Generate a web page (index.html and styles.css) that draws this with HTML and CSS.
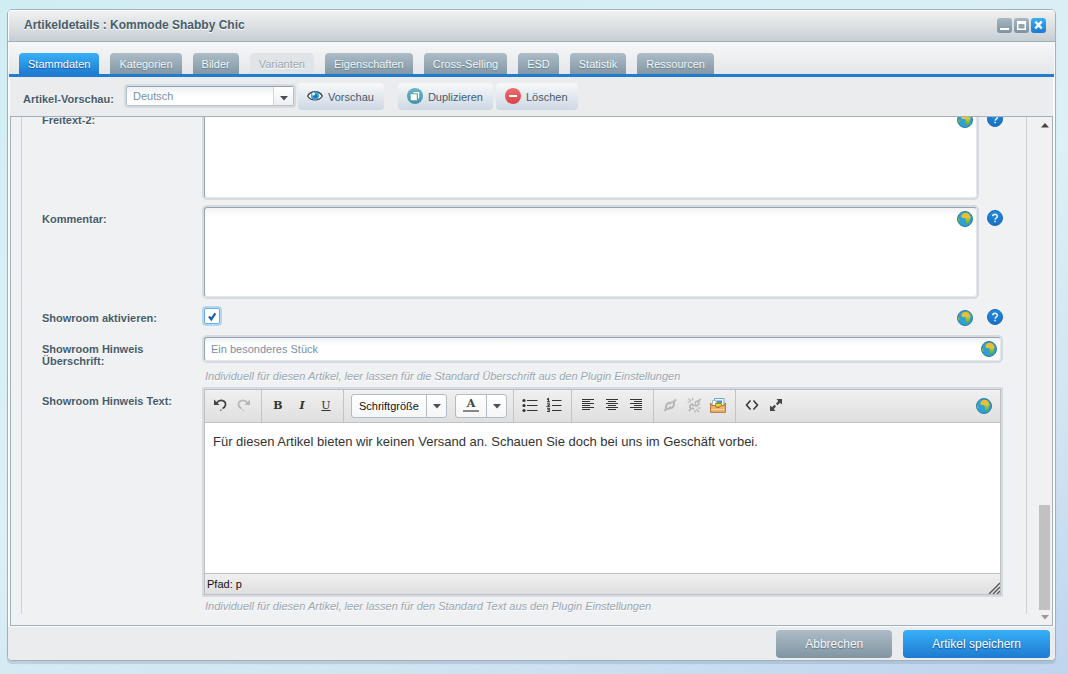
FILE: index.html
```html
<!DOCTYPE html>
<html lang="de">
<head>
<meta charset="utf-8">
<title>Artikeldetails : Kommode Shabby Chic</title>
<link rel="stylesheet" href="styles.css">
</head>
<body>
<svg class="defs" aria-hidden="true">
  <defs>
    <linearGradient id="sea" x1="0" y1="0" x2="0" y2="1"><stop offset="0" stop-color="#3a9fd0"/><stop offset="1" stop-color="#2b9fdc"/></linearGradient>
    <linearGradient id="land" x1="0" y1="0" x2="0" y2="1"><stop offset="0" stop-color="#f3ba2a"/><stop offset=".4" stop-color="#e3c531"/><stop offset=".6" stop-color="#a3c233"/><stop offset="1" stop-color="#5aa829"/></linearGradient>
    <linearGradient id="helpfill" x1="0" y1="0" x2="0" y2="1"><stop offset="0" stop-color="#1c8be4"/><stop offset="1" stop-color="#1b6fc0"/></linearGradient>
    <linearGradient id="teal" x1="0" y1="0" x2="0" y2="1"><stop offset="0" stop-color="#6db7c8"/><stop offset="1" stop-color="#3f94a8"/></linearGradient>
    <linearGradient id="red" x1="0" y1="0" x2="0" y2="1"><stop offset="0" stop-color="#ee6d6f"/><stop offset="1" stop-color="#d8434a"/></linearGradient>
  </defs>
  <symbol id="globe" viewBox="0 0 16 16">
    <circle cx="8" cy="8" r="7.5" fill="url(#sea)" stroke="#2c7c96"/>
    <path d="M5 3.5 6.500 2.200 9.500 1.800 12 3 12.700 5 13.800 6 12.800 8 12.300 10.500 11 13 9.600 13.400 8.800 11 8.800 8.200 7.800 7 5.300 7 4.300 5.500Z" fill="url(#land)"/>
    <path d="M1 7 2.200 8 2.300 10 1.300 10.800Z" fill="#8fc43a"/>
  </symbol>
  <symbol id="help" viewBox="0 0 16 16">
    <circle cx="8" cy="8" r="7.5" fill="url(#helpfill)" stroke="#1b6cb4"/>
    <path d="M5.700 6.300C5.700 3.800 10.400 3.700 10.400 6.200 10.400 7.800 8.200 7.800 8.100 9.600M8.100 10.800V12.300" fill="none" stroke="#e6f1fb" stroke-width="1.600"/>
  </symbol>
  <symbol id="down" viewBox="0 0 8 5"><path d="M0 0H8L4 4.5Z" fill="#4a4f55"/></symbol>
</svg>

<div class="window">
  <header class="titlebar">
    <h1 class="title">Artikeldetails : Kommode Shabby Chic</h1>
    <div class="window-tools">
      <button class="tool" aria-label="Minimieren"><svg viewBox="0 0 15 15"><path d="M3 11H12" stroke="#fff" stroke-width="2"/></svg></button>
      <button class="tool" aria-label="Maximieren"><svg viewBox="0 0 15 15"><path d="M3 3H12V12H3ZM4.500 6V10.500H10.500V6Z" fill="#fff" fill-rule="evenodd"/></svg></button>
      <button class="tool tool-close" aria-label="Schließen"><svg viewBox="0 0 15 15"><path d="M4.300 3.500 10.700 10.500M10.700 3.500 4.300 10.500" stroke="#fff" stroke-width="2.500"/></svg></button>
    </div>
  </header>

  <nav class="tabs">
    <button class="tab tab-active">Stammdaten</button>
    <button class="tab">Kategorien</button>
    <button class="tab">Bilder</button>
    <button class="tab" disabled>Varianten</button>
    <button class="tab">Eigenschaften</button>
    <button class="tab">Cross-Selling</button>
    <button class="tab">ESD</button>
    <button class="tab">Statistik</button>
    <button class="tab">Ressourcen</button>
  </nav>

  <div class="toolbar">
    <label class="label preview-label" for="preview">Artikel-Vorschau:</label>
    <div class="combo">
      <select id="preview"><option>Deutsch</option></select>
      <svg class="combo-arrow" viewBox="0 0 8 5"><use href="#down"/></svg>
    </div>
    <button class="action action-preview">
      <svg class="icon" viewBox="0 0 16 16"><path d="M.7 8C3.500 2.300 12.500 2.300 15.300 8 12.500 13.200 3.500 13.200.7 8Z" fill="#fff" stroke="#3f4549" stroke-width="1.300"/><circle cx="8" cy="7.800" r="4.200" fill="#3fa3d6"/><circle cx="8.300" cy="8.200" r="2" fill="#1878ac"/><circle cx="6.500" cy="6" r="1.500" fill="#e6f6fd"/></svg>Vorschau</button>
    <button class="action">
      <svg class="icon" viewBox="0 0 16 16"><circle cx="8" cy="8" r="8" fill="url(#teal)"/><path d="M6.500 4H12.200V10.500H11V5.300H6.500Z" fill="#fff"/><path d="M3.700 6.200H9.800V12.200H3.700Z" fill="#fff"/></svg>Duplizieren</button>
    <button class="action">
      <svg class="icon" viewBox="0 0 16 16"><circle cx="8" cy="8" r="8" fill="url(#red)"/><path d="M4 8H12" stroke="#fff" stroke-width="2"/></svg>Löschen</button>
  </div>

  <main class="content">
    <form class="fields" id="article">
      <div class="row">
        <label class="label" for="free2">Freitext-2:</label>
        <div class="field"><textarea class="box area" id="free2"></textarea><svg class="icon globe"><use href="#globe"/></svg></div>
        <svg class="icon help"><use href="#help"/></svg>
      </div>
      <div class="row">
        <label class="label" for="comment">Kommentar:</label>
        <div class="field"><textarea class="box area" id="comment"></textarea><svg class="icon globe"><use href="#globe"/></svg></div>
        <svg class="icon help"><use href="#help"/></svg>
      </div>
      <div class="row">
        <label class="label" for="showroom">Showroom aktivieren:</label>
        <div class="field check-field">
          <input class="check" type="checkbox" id="showroom" checked>
          <svg class="tick" viewBox="0 0 16 16"><path d="M5 8.500 7.300 11.300 11.300 5.300" fill="none" stroke="#1b62a5" stroke-width="2.200"/></svg>
          <svg class="icon globe"><use href="#globe"/></svg>
        </div>
        <svg class="icon help"><use href="#help"/></svg>
      </div>
      <div class="row row-hint">
        <label class="label" for="heading">Showroom Hinweis Überschrift:</label>
        <div class="field wide">
          <input class="box line" type="text" id="heading" value="Ein besonderes Stück"><svg class="icon globe"><use href="#globe"/></svg>
          <p class="hint">Individuell für diesen Artikel, leer lassen für die Standard Überschrift aus den Plugin Einstellungen</p>
        </div>
      </div>
      <div class="row row-last">
        <span class="label" id="text-label">Showroom Hinweis Text:</span>
        <div class="field wide">
          <div class="editor">
            <div class="editor-bar">
              <div class="group group-first">
                <button type="button" aria-label="Rückgängig"><svg viewBox="0 0 16 16"><path d="M4.500 6C8 1.500 14 3.500 13.500 8Q13 10.500 10.500 11.500" fill="none" stroke="#444" stroke-width="1.700"/><path d="M2 2.500V8H7.500Z" fill="#444"/><path d="M8 12.500H9.500V14H8Z" fill="#777"/></svg></button>
                <button type="button" class="dim" aria-label="Wiederholen"><svg viewBox="0 0 16 16"><path d="M11.500 6C8 1.500 2 3.500 2.500 8Q3 10.500 5.500 11.500" fill="none" stroke="#444" stroke-width="1.700"/><path d="M14 2.500V8H8.500Z" fill="#444"/><path d="M6.500 12.500H8V14H6.500Z" fill="#777"/></svg></button>
              </div>
              <div class="group">
                <button type="button" class="bold">B</button>
                <button type="button" class="italic">I</button>
                <button type="button" class="underline">U</button>
              </div>
              <div class="group group-split">
                <button type="button" class="split"><span class="split-text">Schriftgröße</span><span class="split-arrow"><svg viewBox="0 0 8 5"><use href="#down"/></svg></span></button>
                <button type="button" class="split"><span class="split-color">A</span><span class="split-arrow"><svg viewBox="0 0 8 5"><use href="#down"/></svg></span></button>
              </div>
              <div class="group">
                <button type="button" aria-label="Liste"><svg viewBox="0 0 16 16"><path d="M5 3.500H15.500M5 8.500H15.500M5 13.500H15.500" stroke="#333"/><g fill="#333"><circle cx="2" cy="3.500" r="1.600"/><circle cx="2" cy="8.500" r="1.600"/><circle cx="2" cy="13.500" r="1.600"/></g></svg></button>
                <button type="button" aria-label="Nummerierte Liste"><svg viewBox="0 0 16 16"><path d="M6 3.500H15.500M6 8.500H15.500M6 13.500H15.500" stroke="#333"/><path d="M1 2.500 2.500 1.500V5M1 4.800H4M1 6.800H3.300V8L1.200 9.300H4M1 11.300H3.300V14.500H1M1.500 12.800H3.300" fill="none" stroke="#333" stroke-width="1.100"/></svg></button>
              </div>
              <div class="group">
                <button type="button" aria-label="Linksbündig"><svg viewBox="0 0 16 16"><path d="M2 2.500H14M2 4.500H10M2 6.500H14M2 8.500H10M2 10.500H14M2 12.500H10" stroke="#333"/></svg></button>
                <button type="button" aria-label="Zentriert"><svg viewBox="0 0 16 16"><path d="M2 2.500H14M4 4.500H12M2 6.500H14M4 8.500H12M2 10.500H14M4 12.500H12" stroke="#333"/></svg></button>
                <button type="button" aria-label="Rechtsbündig"><svg viewBox="0 0 16 16"><path d="M2 2.500H14M6 4.500H14M2 6.500H14M6 8.500H14M2 10.500H14M6 12.500H14" stroke="#333"/></svg></button>
              </div>
              <div class="group">
                <button type="button" class="dim" aria-label="Link"><svg viewBox="0 0 16 16"><g fill="none" stroke="#444" stroke-width="2"><path d="M9 10Q4 14 4 10Q4 6.500 8 5.500M7 7Q12 3 12 6.500Q12 10.500 8 11.500"/><path d="M2.500 14 4.500 11.500M11.500 5 14 2.500"/></g></svg></button>
                <button type="button" class="dim" aria-label="Link entfernen"><svg viewBox="0 0 16 16"><g fill="none" stroke="#444" stroke-width="1.800"><path d="M3 14 5 11.500Q2.500 8.500 6 7L8 9M8 12 6 11M8.500 6Q11 3 12.500 5 13.500 8 10 9L9 7M12 5 14.500 2"/><path d="M1.500 5H4.500M2.500 2 5 4M6.500 1V3.500M11.500 11H15M10.500 12.500 13 15M9 13V15.500" stroke-width="1.200"/></g></svg></button>
                <button type="button" aria-label="Medien"><svg viewBox="0 0 16 16"><path d="M4.500 1.500H14V10H4.500Z" fill="#f2f8fc" stroke="#6fa9d0"/><path d="M6.500 3.500H12V6H6.500Z" fill="#4597cd"/><path d="M2.500 3.500H6V9H2.500Z" fill="#fff" stroke="#a8bccb"/><path d="M5.500 6.500H11.500V10H5.500Z" fill="#f3d32d" stroke="#ad8a18"/><path d="M.6 6 2 8.500H5L6.500 10.500H9.500L11 8.500H14L15.400 6V15.300H.6Z" fill="#edb373" stroke="#b27331"/><path d="M1.500 12.500H14.500" stroke="#f8d2a5"/></svg></button>
              </div>
              <div class="group group-end">
                <button type="button" aria-label="Quelltext"><svg viewBox="0 0 16 16"><path d="M6.500 3.500 2.500 8 6.500 12.500M9.500 3.500 13.500 8 9.500 12.500" fill="none" stroke="#333" stroke-width="1.500"/></svg></button>
                <button type="button" aria-label="Vollbild"><svg viewBox="0 0 16 16"><path d="M8.500 2H14V7.500L12 5.800 9.500 8.200 8 6.500 10.300 4ZM7.500 14H2V8.500L4 10.200 6.500 7.800 8 9.500 5.700 12Z" fill="#444"/></svg></button>
              </div>
              <svg class="icon editor-globe"><use href="#globe"/></svg>
            </div>
            <div class="editor-body" contenteditable="true" role="textbox" aria-labelledby="text-label">Für diesen Artikel bieten wir keinen Versand an. Schauen Sie doch bei uns im Geschäft vorbei.</div>
            <div class="editor-path"><span>Pfad: p</span><svg class="grip" viewBox="0 0 12 12"><path d="M1 12 12 1M5 12 12 5M9 12 12 9" stroke="#555" stroke-width="1.400"/></svg></div>
          </div>
          <p class="hint hint-editor">Individuell für diesen Artikel, leer lassen für den Standard Text aus den Plugin Einstellungen</p>
        </div>
      </div>
    </form>
    <div class="scrollbar" aria-hidden="true">
      <svg class="scroll-arrow" viewBox="0 0 8 5"><path d="M0 4.500H8L4 0Z" fill="#444"/></svg>
      <div class="thumb"></div>
      <svg class="scroll-arrow" viewBox="0 0 8 5"><path d="M0 0H8L4 4.500Z" fill="#999"/></svg>
    </div>
  </main>

  <footer class="footer">
    <button class="btn">Abbrechen</button>
    <button class="btn btn-primary">Artikel speichern</button>
  </footer>
</div>
</body>
</html>
```
FILE: styles.css
```css
* { box-sizing: border-box; }
body {
  margin: 0;
  height: 100vh;
  padding: 9px 12px 13px 7px;
  background: linear-gradient(160deg, #d1edf4 0%, #dcf0f6 50%, #cfe3f2 78%, #bfd4ee 100%);
  font: 11px/12px "Liberation Sans", Arial, sans-serif;
  color: #475c6a;
}
button, input, select, textarea { font: inherit; color: inherit; margin: 0; }
button { border: 0; padding: 0; background: none; }
svg { display: block; flex: none; }
.defs { position: absolute; width: 0; height: 0; }
.icon { width: 16px; height: 16px; }

.window {
  height: 100%;
  display: flex;
  flex-direction: column;
  border: 1px solid #a1b1bc;
  border-radius: 5px;
  background: #fafbfb;
  box-shadow: 0 3px 1px rgba(120, 145, 170, .3);
  overflow: hidden;
}
.titlebar {
  flex: none;
  height: 32px;
  display: flex;
  align-items: center;
  justify-content: space-between;
  padding: 0 9px 0 16px;
  border-bottom: 1px solid #9fafba;
  background: linear-gradient(#f1f2f2, #dde1e3 50%, #c6ced4);
  box-shadow: inset 1px 1px 0 #fff;
}
.title {
  margin: 0;
  font-size: 12px;
  line-height: 30px;
  height: 31px;
  text-shadow: 0 1px 0 #fff;
}
.window-tools { display: flex; gap: 2px; }
.tool { width: 15px; height: 15px; border-radius: 3px; background: linear-gradient(#a9b8c3, #7d929f); }
.tool-close { background: linear-gradient(#35b1f8, #1c79d0); }

.tabs {
  flex: none;
  height: 35px;
  margin: 0 1px;
  display: flex;
  align-items: flex-end;
  gap: 11px;
  padding: 0 10px;
  border-bottom: 3px solid #1f7dd1;
  background: linear-gradient(#f6f7f7, #e4e6e8);
}
.tab {
  height: 21px;
  padding: 0 9px;
  border-radius: 4px 4px 0 0;
  background: linear-gradient(#adbcc7, #8298a5);
  color: #f3f6f8;
  text-shadow: 0 1px 1px #667b89;
}
.tab-active { background: linear-gradient(#38b0f8, #1f7bd0); color: #fff; text-shadow: 0 1px 1px #0b4fa0; }
.tab:disabled { background: #e1e4e6; color: #98a6b0; text-shadow: 0 1px 0 #fff; }

.toolbar {
  flex: none;
  height: 39px;
  margin: 0 2px;
  padding: 6px 13px;
  display: flex;
  align-items: flex-start;
  background: #ebecee;
}
.label { font-weight: bold; text-shadow: 0 1px 0 #fff; }
.preview-label { width: 103px; padding-top: 10px; }
.combo {
  position: relative;
  width: 168px;
  height: 20px;
  margin: 3px 4px 0 0;
}
.combo select {
  appearance: none;
  display: block;
  width: 100%;
  height: 100%;
  padding: 0 26px 0 6px;
  border: 1px solid #b5c0c9;
  border-top-color: #93a3af;
  border-radius: 2px;
  box-shadow: 0 0 0 2px #d5dbe2;
  color: #7890a5;
  background: linear-gradient(#eef1f1, #fff 50%);
}
.combo-arrow {
  position: absolute;
  top: 1px;
  right: 1px;
  width: 20px;
  height: 18px;
  padding: 9px 5px 4px 6px;
  border-left: 1px solid #d0d6db;
  background: linear-gradient(#fff, #edf0f3);
  pointer-events: none;
}
.action {
  height: 27px;
  display: flex;
  align-items: center;
  gap: 5px;
  padding: 0 10px 0 9px;
  margin-right: 3px;
  border-radius: 4px;
  background: linear-gradient(#f8f9fa, #cdd8e5);
}
.action .icon { margin-bottom: 2px; }
.action-preview { margin-right: 14px; }

.content {
  flex: 1;
  min-height: 0;
  display: flex;
  margin: 0 2px;
  border: 1px solid #a1b1bc;
  background: #f0f1f3;
  overflow: hidden;
}
.fields {
  flex: 1;
  min-width: 0;
  align-self: flex-start;
  margin: -9px 10px 0;
  padding: 0 23px 2px 20px;
  border: solid #cbd0d5;
  border-width: 0 1px;
}
.row { display: flex; margin-bottom: 9px; }
.row-hint { margin-bottom: 7px; }
.row-last { margin-bottom: 0; }
.row > .label { flex: none; width: 162px; padding: 6px 24px 0 0; }
.field { position: relative; flex: 1; min-width: 0; }
.wide { margin-right: 2px; }
.box {
  display: block;
  width: 100%;
  border: 1px solid #e4e8ec;
  border-top-color: #96a5b1;
  border-left-color: #96a5b1;
  border-radius: 3px;
  box-shadow: 0 0 0 2px #d5dbe1;
  color: #7890a5;
  background: linear-gradient(#f1f2f3, #fff 8px);
}
.area { height: 90px; resize: none; }
.line { height: 24px; padding: 0 32px 0 6px; }
.globe { position: absolute; top: 4px; right: 4px; }
.help { margin: 3px 0 0 10px; }
.check-field { height: 22px; }
.check {
  appearance: none;
  display: block;
  width: 16px;
  height: 16px;
  margin: 2px 0 0;
  border: 1px solid #6aaee8;
  border-radius: 2px;
  background: #fff;
  box-shadow: 0 0 0 2px #b4d8f4;
}
.tick { position: absolute; top: 2px; left: 0; width: 16px; height: 16px; pointer-events: none; visibility: hidden; }
.check:checked + .tick { visibility: visible; }
.hint {
  margin: 9px 0 0;
  padding-left: 1px;
  font-style: italic;
  color: #98a6b1;
  text-shadow: 0 1px 0 #fff;
}
.hint-editor { margin-top: 5px; }

.editor { border: 1px solid #bcc0c4; box-shadow: 0 0 0 2px #d7dbe1; color: #111; }
.editor-bar {
  display: flex;
  height: 33px;
  border-bottom: 1px solid #c0c2c4;
  background: linear-gradient(#f0f0f0, #dfdfdf);
}
.group {
  display: flex;
  align-items: center;
  padding: 0 5px 0 4px;
  border-right: 1px solid #c4c4c4;
}
.group-first { padding: 0 5px 0 3px; }
.group-end { border: 0; flex: 1; }
.group > button { width: 24px; height: 24px; display: grid; place-items: center; color: #333; }
.group > button > svg { width: 16px; height: 16px; margin-bottom: 2px; }
.group > .dim { opacity: .3; }
.group > .bold, .group > .italic, .group > .underline { padding-bottom: 1px; font: bold 11px/14px "DejaVu Serif", serif; }
.group > .italic { font-style: italic; }
.group > .underline { font-weight: normal; text-decoration: underline; }
.group-split { gap: 8px; padding: 0 6px 0 7px; }
.group > .split {
  display: flex;
  place-items: stretch;
  width: auto;
  height: 24px;
  border: 1px solid #b2bcc3;
  border-radius: 3px;
  background: linear-gradient(#fff, #f5f6f7);
  color: #111;
}
.split-text { width: 74px; padding-left: 7px; line-height: 22px; text-align: left; }
.split-arrow { display: grid; place-items: center; width: 20px; border-left: 1px solid #b2bcc3; }
.split-arrow svg { width: 8px; height: 5px; }
.split-color { width: 16px; margin: 2px 7px 5px; border-bottom: 2px solid #888; font: bold 11px/13px "DejaVu Serif", serif; color: #444; }
.editor-globe { margin: 8px 8px 0 0; }
.editor-body {
  min-height: 150px;
  padding: 11px 8px;
  font-size: 13px;
  line-height: 16px;
  color: #333;
  background: #fff;
}
.editor-path {
  display: flex;
  align-items: flex-end;
  justify-content: space-between;
  height: 21px;
  padding-left: 2px;
  border-top: 1px solid #c0c2c4;
  background: linear-gradient(#f0f0f0, #dfdfdf);
  line-height: 20px;
}
.grip { width: 12px; height: 12px; }

.scrollbar {
  display: flex;
  flex-direction: column;
  align-items: center;
  width: 15px;
  padding: 6px 0 5px;
  background: #f1f1f1;
}
.scroll-arrow { width: 8px; height: 5px; }
.thumb { width: 11px; height: 105px; margin: auto 0 5px; background: #c1c1c1; }

.footer {
  flex: none;
  display: flex;
  justify-content: flex-end;
  gap: 11px;
  margin-top: 1px;
  padding: 3px 5px 2px;
  background: #ebecee;
}
.btn {
  height: 28px;
  padding: 0 29px;
  border-radius: 4px;
  font-size: 12px;
  color: #f5f7f9;
  background: linear-gradient(#adbcc7, #8095a2);
  text-shadow: 0 1px 1px #5d707d;
}
.btn-primary { background: linear-gradient(#37b0f8, #1f7ad0); color: #fff; text-shadow: 0 1px 1px #0c4f9a; }
```
